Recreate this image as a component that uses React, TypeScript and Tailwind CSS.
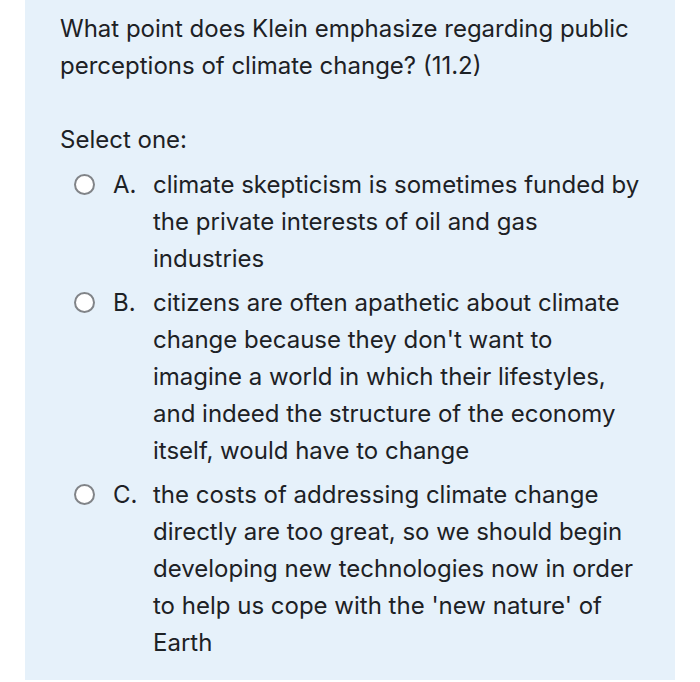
const options = [
  {
    id: "a",
    letter: "A.",
    lines: ["climate skepticism is sometimes funded by", "the private interests of oil and gas", "industries"],
  },
  {
    id: "b",
    letter: "B.",
    lines: [
      "citizens are often apathetic about climate",
      "change because they don't want to",
      "imagine a world in which their lifestyles,",
      "and indeed the structure of the economy",
      "itself, would have to change",
    ],
  },
  {
    id: "c",
    letter: "C.",
    lines: [
      "the costs of addressing climate change",
      "directly are too great, so we should begin",
      "developing new technologies now in order",
      "to help us cope with the 'new nature' of",
      "Earth",
    ],
  },
];

export default function App() {
  return (
    <div className="w-[700px] h-[682px] bg-white font-['Inter',sans-serif] text-[#1d2125]">
      <div className="mx-[25px] h-[680px] bg-[#e6f1fa] pl-[35px] pr-[20px] pt-[10px]">
        <p className="text-[24px] leading-[37px] whitespace-nowrap">
          What point does Klein emphasize regarding public
          <br />
          perceptions of climate change? (11.2)
        </p>

        <p className="mt-[37px] text-[24px] leading-[37px]">Select one:</p>

        <div className="mt-[8px] flex flex-col gap-[7px]">
          {options.map((option) => (
            <label key={option.id} className="flex items-start">
              <span className="ml-[14px] mt-[8px] w-[21px] h-[21px] rounded-full border-2 border-[#818488] bg-white flex-shrink-0" />
              <span className="ml-[18px] w-[40px] flex-shrink-0 text-[24px] leading-[37px]">
                {option.letter}
              </span>
              <span className="text-[24px] leading-[37px] whitespace-nowrap">
                {option.lines.map((line, i) => (
                  <span key={i} className="block">
                    {line}
                  </span>
                ))}
              </span>
            </label>
          ))}
        </div>
      </div>
    </div>
  );
}
